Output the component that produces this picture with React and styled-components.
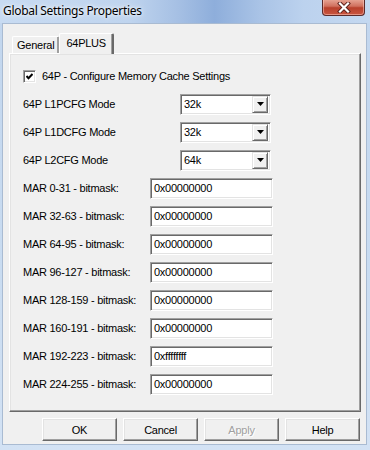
import React from "react";
import styled, { createGlobalStyle } from "styled-components";

const GlobalStyle = createGlobalStyle`
  html, body {
    margin: 0;
    padding: 0;
    background: #c7d9ef;
  }
  * {
    box-sizing: border-box;
  }
`;

const Window = styled.div`
  width: 370px;
  height: 450px;
  display: flex;
  flex-direction: column;
  background: linear-gradient(180deg, #c2d6ee 0%, #c9dcf1 60%, #d3e2f4 100%);
  font-family: "Liberation Sans", Arial, sans-serif;
  font-size: 11px;
  letter-spacing: -0.25px;
  color: #000;
  overflow: hidden;
`;

const TitleBar = styled.div`
  height: 23px;
  flex-shrink: 0;
  display: flex;
  align-items: flex-start;
  padding-left: 3px;
  background: linear-gradient(
    90deg,
    #c8dbf2 0%,
    #bfd4ee 35%,
    #a6c0e4 48%,
    #8eaedb 58%,
    #a9c3e6 70%,
    #bcd2ee 82%,
    #c4d8f0 100%
  );
`;

const Title = styled.span`
  margin-top: 3px;
  font-family: "Noto Sans", "Open Sans", sans-serif;
  font-size: 12px;
  line-height: 16px;
  letter-spacing: -0.3px;
  color: #000;
  text-shadow: 0 0 6px rgba(255, 255, 255, 0.9), 0 0 3px rgba(255, 255, 255, 0.9);
`;

const CloseButton = styled.div`
  margin-left: auto;
  margin-right: 5px;
  margin-top: -1px;
  width: 43px;
  height: 17px;
  border: 1px solid #5b2a2a;
  border-top: none;
  border-radius: 0 0 4px 4px;
  background: linear-gradient(180deg, #e9a999 0%, #d0705e 45%, #b8402c 55%, #c9553f 100%);
  box-shadow: inset 0 0 0 1px rgba(255, 210, 200, 0.5);
  display: flex;
  align-items: center;
  justify-content: center;
`;

const Client = styled.div`
  flex: 1;
  margin: 0 3px 0 2px;
  background: #f0f0f0;
  border: 1px solid #a9bbd2;
  display: flex;
  flex-direction: column;
  padding: 9px 5px 3px 6px;
`;

const BottomFrame = styled.div`
  height: 7px;
  flex-shrink: 0;
`;

const TabStrip = styled.div`
  display: flex;
  align-items: flex-end;
  height: 20px;
  padding-left: 3px;
  position: relative;
  z-index: 1;
`;

const Tab = styled.div`
  height: ${p => (p.active ? "21px" : "17px")};
  margin-bottom: ${p => (p.active ? "-1px" : "0")};
  padding: ${p => (p.active ? "2px 6px 0 6px" : "0 4px 0 4px")};
  margin-left: ${p => (p.active ? "-1px" : "0")};
  display: flex;
  align-items: ${p => (p.active ? "flex-start" : "center")};
  background: #f0f0f0;
  border-top: 1px solid #fff;
  border-left: 1px solid #fff;
  border-right: 2px solid;
  border-right-color: ${p => (p.active ? "#696969" : "#a0a0a0")};
  border-radius: 2px 2px 0 0;
  box-shadow: inset -1px 0 0 #a0a0a0;
  line-height: 14px;
  z-index: ${p => (p.active ? 2 : 1)};
`;

const Panel = styled.div`
  height: 359px;
  border-top: 1px solid #fff;
  border-left: 1px solid #fff;
  border-right: 1px solid #696969;
  border-bottom: 1px solid #696969;
  box-shadow: inset -1px -1px 0 #a0a0a0, inset 1px 1px 0 #e3e3e3;
  padding: 8px 0 0 13px;
  display: flex;
  flex-direction: column;
`;

const Row = styled.div`
  height: 28px;
  display: flex;
  align-items: center;
`;

const Label = styled.span`
  width: ${p => p.w}px;
  flex-shrink: 0;
  white-space: nowrap;
`;

const CheckBox = styled.span`
  width: 13px;
  height: 13px;
  background: #fff;
  border-top: 1px solid #a0a0a0;
  border-left: 1px solid #a0a0a0;
  border-right: 1px solid #fff;
  border-bottom: 1px solid #fff;
  box-shadow: inset 1px 1px 0 #696969, inset -1px -1px 0 #e3e3e3;
  display: flex;
  align-items: center;
  justify-content: center;
  margin-right: 6px;
  flex-shrink: 0;
`;

const Sunken = styled.div`
  height: 21px;
  width: ${p => p.w}px;
  background: #fff;
  border-top: 1px solid #a0a0a0;
  border-left: 1px solid #a0a0a0;
  border-right: 1px solid #fff;
  border-bottom: 1px solid #fff;
  box-shadow: inset 1px 1px 0 #696969, inset -1px -1px 0 #e3e3e3;
  display: flex;
  align-items: center;
  padding: 2px 2px 2px 3px;
`;

const FieldText = styled.span`
  flex: 1;
  line-height: 14px;
`;

const DropButton = styled.span`
  width: 16px;
  height: 17px;
  background: #f0f0f0;
  border-top: 1px solid #e3e3e3;
  border-left: 1px solid #e3e3e3;
  border-right: 1px solid #696969;
  border-bottom: 1px solid #696969;
  box-shadow: inset 1px 1px 0 #fff, inset -1px -1px 0 #a0a0a0;
  display: flex;
  align-items: center;
  justify-content: center;
`;

const ButtonRow = styled.div`
  display: flex;
  justify-content: flex-end;
  gap: 6px;
  margin-top: 6px;
  padding-right: 1px;
`;

const Button = styled.div`
  width: 75px;
  height: 23px;
  background: #f0f0f0;
  border-top: 1px solid #fff;
  border-left: 1px solid #fff;
  border-right: 1px solid #696969;
  border-bottom: 1px solid #696969;
  box-shadow: inset -1px -1px 0 #a0a0a0, inset 1px 1px 0 #e3e3e3;
  display: flex;
  align-items: center;
  justify-content: center;
  color: ${p => (p.disabled ? "#a0a0a0" : "#000")};
  text-shadow: ${p => (p.disabled ? "1px 1px 0 #fff" : "none")};
`;

const selects = [
  ["64P L1PCFG Mode", "32k"],
  ["64P L1DCFG Mode", "32k"],
  ["64P L2CFG Mode", "64k"]
];

const masks = [
  ["MAR 0-31 - bitmask:", "0x00000000"],
  ["MAR 32-63 - bitmask:", "0x00000000"],
  ["MAR 64-95 - bitmask:", "0x00000000"],
  ["MAR 96-127 - bitmask:", "0x00000000"],
  ["MAR 128-159 - bitmask:", "0x00000000"],
  ["MAR 160-191 - bitmask:", "0x00000000"],
  ["MAR 192-223 - bitmask:", "0xffffffff"],
  ["MAR 224-255 - bitmask:", "0x00000000"]
];

const App = () => {
  return (
    <>
      <GlobalStyle />
      <Window>
        <TitleBar>
          <Title>Global Settings Properties</Title>
          <CloseButton>
            <svg width="14" height="11" viewBox="0 0 14 11">
              <path
                d="M3 1.5 L11 9.5 M11 1.5 L3 9.5"
                stroke="#5a1f1a"
                strokeWidth="4"
                strokeLinecap="square"
              />
              <path
                d="M3 1.5 L11 9.5 M11 1.5 L3 9.5"
                stroke="#fff"
                strokeWidth="2.2"
                strokeLinecap="square"
              />
            </svg>
          </CloseButton>
        </TitleBar>
        <Client>
          <TabStrip>
            <Tab>General</Tab>
            <Tab active>64PLUS</Tab>
          </TabStrip>
          <Panel>
            <Row>
              <CheckBox>
                <svg width="7" height="7" viewBox="0 0 7 7">
                  <path d="M0.5 3 L2.5 5.3 L6.5 1" stroke="#000" strokeWidth="2" fill="none" />
                </svg>
              </CheckBox>
              <span>64P - Configure Memory Cache Settings</span>
            </Row>
            {selects.map(([label, value]) => (
              <Row key={label}>
                <Label w={157}>{label}</Label>
                <Sunken w={91}>
                  <FieldText>{value}</FieldText>
                  <DropButton>
                    <svg width="7" height="4" viewBox="0 0 7 4">
                      <path d="M0 0 H7 L3.5 4 Z" fill="#000" />
                    </svg>
                  </DropButton>
                </Sunken>
              </Row>
            ))}
            {masks.map(([label, value]) => (
              <Row key={label}>
                <Label w={127}>{label}</Label>
                <Sunken w={123}>
                  <FieldText>{value}</FieldText>
                </Sunken>
              </Row>
            ))}
          </Panel>
          <ButtonRow>
            <Button>OK</Button>
            <Button>Cancel</Button>
            <Button disabled>Apply</Button>
            <Button>Help</Button>
          </ButtonRow>
        </Client>
        <BottomFrame />
      </Window>
    </>
  );
};

export default App;
